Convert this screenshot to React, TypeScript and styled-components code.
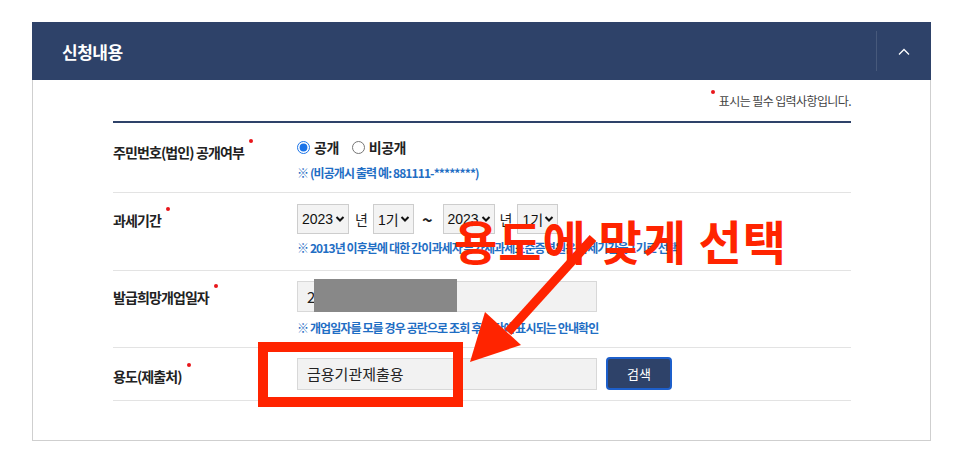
import React from 'react';
import styled, { createGlobalStyle } from 'styled-components';

const NAVY = '#2e4269';
const NOTE_BLUE = '#1f6ec4';
const MARK_RED = '#ff2400';

const GlobalStyle = createGlobalStyle`
  body {
    margin: 0;
    background: #fff;
    font-family: 'Noto Sans CJK KR', 'Noto Sans', sans-serif;
    color: #222;
  }
`;

const StyledPage = styled.div`
  padding: 22px 34px 0 32px;
  width: 899px;
`;

const StyledPanelHeader = styled.header`
  height: 58px;
  background: ${NAVY};
  display: flex;
  align-items: center;
  justify-content: space-between;
`;

const StyledPanelTitle = styled.h2`
  margin: 0 0 0 30px;
  color: #fff;
  font-size: 17px;
  font-weight: 700;
  letter-spacing: -0.5px;
`;

const StyledToggle = styled.button`
  width: 55px;
  height: 40px;
  border: 0;
  border-left: 1px solid rgba(255, 255, 255, 0.12);
  background: transparent;
  display: flex;
  align-items: center;
  justify-content: center;
  padding: 0;
`;

const StyledPanelBody = styled.div`
  position: relative;
  height: 360px;
  border: 1px solid #cfcfcf;
  border-top: 0;
  padding: 0 79px 0 80px;
`;

const StyledRequiredNote = styled.p`
  margin: 0;
  padding: 13px 0 12px;
  text-align: right;
  font-size: 12px;
  color: #444;
  letter-spacing: -0.6px;
  line-height: 16px;

  span:first-child {
    margin-right: 4px;
  }
`;

const StyledTable = styled.div`
  border-top: 2px solid ${NAVY};
`;

const StyledRow = styled.div<{ $pad: string }>`
  display: grid;
  grid-template-columns: 184px 1fr;
  align-items: start;
  padding: ${({ $pad }) => $pad};
  border-bottom: 1px solid #e3e3e3;
`;

const StyledLabel = styled.div<{ $top: number }>`
  margin-top: ${({ $top }) => $top}px;
  font-size: 14px;
  font-weight: 700;
  line-height: 20px;
  letter-spacing: -0.9px;
  color: #222;
`;

const StyledDot = styled.span`
  display: inline-block;
  width: 4px;
  height: 4px;
  border-radius: 50%;
  background: #e8161b;
  margin-left: 5px;
  vertical-align: top;
  position: relative;
  top: -3px;
`;

const StyledField = styled.div<{ $gap: number }>`
  display: flex;
  flex-direction: column;
  align-items: flex-start;
  gap: ${({ $gap }) => $gap}px;
`;

const StyledLine = styled.div`
  display: flex;
  align-items: center;
`;

const StyledRadioLabel = styled.label`
  display: inline-flex;
  align-items: center;
  gap: 4px;
  margin-right: 13px;
  font-size: 14px;
  font-weight: 700;
  line-height: 20px;
  letter-spacing: -0.5px;
  color: #222;

  input {
    margin: 0;
    width: 13px;
    height: 13px;
    accent-color: #1a73e8;
  }
`;

const StyledNote = styled.p`
  margin: 0;
  font-size: 12px;
  font-weight: 700;
  line-height: 18px;
  letter-spacing: -0.9px;
  color: ${NOTE_BLUE};
  white-space: nowrap;
`;

const StyledSelect = styled.div<{ $width: number }>`
  width: ${({ $width }) => $width}px;
  height: 30px;
  box-sizing: border-box;
  border: 1px solid #cdcdcd;
  background: #f3f3f3;
  display: flex;
  align-items: center;
  justify-content: space-between;
  padding: 0 3px 0 4px;
  font-family: 'Liberation Sans', 'Noto Sans CJK KR', sans-serif;
  font-size: 14px;
  color: #111;
  white-space: nowrap;
`;

const StyledUnit = styled.span<{ $mx: string; $size?: number }>`
  margin: ${({ $mx }) => $mx};
  font-size: ${({ $size }) => $size ?? 14}px;
  font-weight: ${({ $size }) => ($size ? 700 : 400)};
  color: #222;
`;

const StyledTextBox = styled.div<{ $height: number }>`
  position: relative;
  width: 300px;
  height: ${({ $height }) => $height}px;
  box-sizing: border-box;
  border: 1px solid #d8d8d8;
  background: #f2f2f2;
  display: flex;
  align-items: center;
  padding-left: 9px;
  font-size: 15px;
  color: #222;
`;

const StyledRedaction = styled.span`
  position: absolute;
  left: 16px;
  top: -3px;
  width: 143px;
  height: 33px;
  background: #888;
`;

const StyledSearchButton = styled.button`
  margin-left: 9px;
  width: 66px;
  height: 33px;
  border: 2px solid #1d5fcb;
  border-radius: 4px;
  background: ${NAVY};
  color: #fff;
  font-family: inherit;
  font-size: 13px;
`;

const StyledCallout = styled.div`
  position: absolute;
  left: 421px;
  top: 130px;
  font-size: 47px;
  font-weight: 700;
  line-height: 60px;
  letter-spacing: 1px;
  color: ${MARK_RED};
  white-space: nowrap;
`;

const StyledHighlight = styled.div`
  position: absolute;
  left: 225px;
  top: 262px;
  width: 205px;
  height: 65px;
  box-sizing: border-box;
  border: 10px solid ${MARK_RED};
`;

const StyledArrow = styled.svg`
  position: absolute;
  left: 380px;
  top: 140px;
`;

const Select = ({ value, width }: { value: string; width: number }) => (
  <StyledSelect $width={width}>
    <span>{value}</span>
    <svg width="10" height="8" viewBox="0 0 10 8">
      <path d="M1.5 2 L5 5.5 L8.5 2" fill="none" stroke="#111" strokeWidth="2" />
    </svg>
  </StyledSelect>
);

const Label = ({ text, top }: { text: string; top: number }) => (
  <StyledLabel $top={top}>
    {text}
    <StyledDot />
  </StyledLabel>
);

const App = () => {
  return (
    <>
      <GlobalStyle />
      <StyledPage>
        <StyledPanelHeader>
          <StyledPanelTitle>신청내용</StyledPanelTitle>
          <StyledToggle aria-label="접기">
            <svg width="12" height="7" viewBox="0 0 12 7">
              <path d="M1 6.5 L6 1.5 L11 6.5" fill="none" stroke="#fff" strokeWidth="1.3" />
            </svg>
          </StyledToggle>
        </StyledPanelHeader>
        <StyledPanelBody>
          <StyledRequiredNote>
            <StyledDot />
            <span>표시는 필수 입력사항입니다.</span>
          </StyledRequiredNote>
          <StyledTable>
            <StyledRow $pad="14px 0 10px">
              <Label text="주민번호(법인) 공개여부" top={5} />
              <StyledField $gap={7}>
                <StyledLine>
                  <StyledRadioLabel>
                    <input type="radio" name="open" defaultChecked />
                    공개
                  </StyledRadioLabel>
                  <StyledRadioLabel>
                    <input type="radio" name="open" />
                    비공개
                  </StyledRadioLabel>
                </StyledLine>
                <StyledNote>※ (비공개시 출력 예: 881111-********)</StyledNote>
              </StyledField>
            </StyledRow>
            <StyledRow $pad="11px 0 13px">
              <Label text="과세기간" top={6} />
              <StyledField $gap={5}>
                <StyledLine>
                  <Select value="2023" width={52} />
                  <StyledUnit $mx="0 5px 0 6px">년</StyledUnit>
                  <Select value="1기" width={41} />
                  <StyledUnit $mx="0 10px 0 8px" $size={18}>~</StyledUnit>
                  <Select value="2023" width={52} />
                  <StyledUnit $mx="0 5px 0 5px">년</StyledUnit>
                  <Select value="1기" width={41} />
                </StyledLine>
                <StyledNote>
                  ※ 2013년 이후분에 대한 간이과세자 부가세과세표준증명원은 과세기간을 1기로 선택
                </StyledNote>
              </StyledField>
            </StyledRow>
            <StyledRow $pad="10px 0 10px">
              <Label text="발급희망개업일자" top={6} />
              <StyledField $gap={7}>
                <StyledTextBox $height={31}>
                  2
                  <StyledRedaction />
                </StyledTextBox>
                <StyledNote>※ 개업일자를 모를 경우 공란으로 조회 후 하단에 표시되는 안내확인</StyledNote>
              </StyledField>
            </StyledRow>
            <StyledRow $pad="9px 0 10px">
              <Label text="용도(제출처)" top={9} />
              <StyledLine>
                <StyledTextBox $height={32}>금용기관제출용</StyledTextBox>
                <StyledSearchButton>검색</StyledSearchButton>
              </StyledLine>
            </StyledRow>
          </StyledTable>
          <StyledCallout>용도에 맞게 선택</StyledCallout>
          <StyledHighlight />
          <StyledArrow width="220" height="150" viewBox="0 0 220 150">
            <line x1="180" y1="18" x2="95" y2="112" stroke={MARK_RED} strokeWidth="9" />
            <polygon points="57,142 72,92 108,125" fill={MARK_RED} />
          </StyledArrow>
        </StyledPanelBody>
      </StyledPage>
    </>
  );
};

export default App;
